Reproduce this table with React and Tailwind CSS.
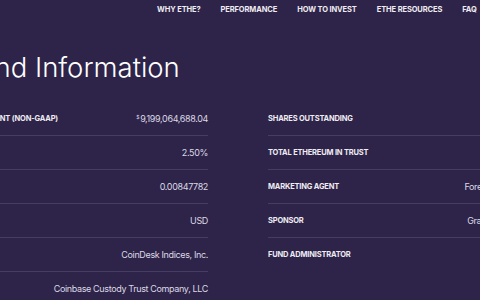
import React from "react";

const left = [
  { label: "ASSETS UNDER MANAGEMENT (NON-GAAP)", value: "9,199,064,688.04", dollar: true },
  { label: "EXPENSE RATIO", value: "2.50%" },
  { label: "ETHEREUM PER SHARE", value: "0.00847782" },
  { label: "BASE CURRENCY", value: "USD" },
  { label: "INDEX PROVIDER", value: "CoinDesk Indices, Inc." },
  { label: "CUSTODIAN", value: "Coinbase Custody Trust Company, LLC" },
];

const right = [
  { label: "SHARES OUTSTANDING", value: "" },
  { label: "TOTAL ETHEREUM IN TRUST", value: "" },
  { label: "MARKETING AGENT", value: "Foreside Fund Services, LLC" },
  { label: "SPONSOR", value: "Grayscale Investments, LLC" },
  { label: "FUND ADMINISTRATOR", value: "" },
];

function Row({ label, value, dollar, last }) {
  return (
    <div
      className={
        "flex items-center justify-between h-[34px] whitespace-nowrap " +
        (last ? "" : "border-b border-[#463d63]")
      }
    >
      <span className="text-[7.5px] font-bold tracking-tight text-[#eeecf2]">{label}</span>
      <span className="text-[9px] tracking-[-0.04em] text-[#dcd9e4]">
        {dollar ? <sup className="text-[5px] mr-[1px]">$</sup> : null}
        {value}
      </span>
    </div>
  );
}

export default function App() {
  return (
    <div
      className="w-[480px] h-[300px] overflow-hidden bg-[#2e2449] text-white"
      style={{ fontFamily: "Inter, 'Liberation Sans', sans-serif" }}
    >
      <nav className="flex gap-[20px] ml-[157px] h-[20px] items-center whitespace-nowrap text-[7.5px] font-bold tracking-[-0.015em] text-[#eeecf2]">
        <span>WHY ETHE?</span>
        <span>PERFORMANCE</span>
        <span>HOW TO INVEST</span>
        <span>ETHE RESOURCES</span>
        <span>FAQ</span>
      </nav>
      <h1 className="ml-[-37px] mt-[30px] text-[27.5px] font-light leading-[34px] whitespace-nowrap text-white">
        Fund Information
      </h1>
      <div className="ml-[-101px] mt-[18px] grid grid-cols-[309px_308px] gap-x-[60px]">
        <div className="flex flex-col">
          {left.map((r, i) => (
            <Row key={i} {...r} last={i === left.length - 1} />
          ))}
        </div>
        <div className="flex flex-col">
          {right.map((r, i) => (
            <Row key={i} {...r} last={i === right.length - 1} />
          ))}
        </div>
      </div>
    </div>
  );
}
